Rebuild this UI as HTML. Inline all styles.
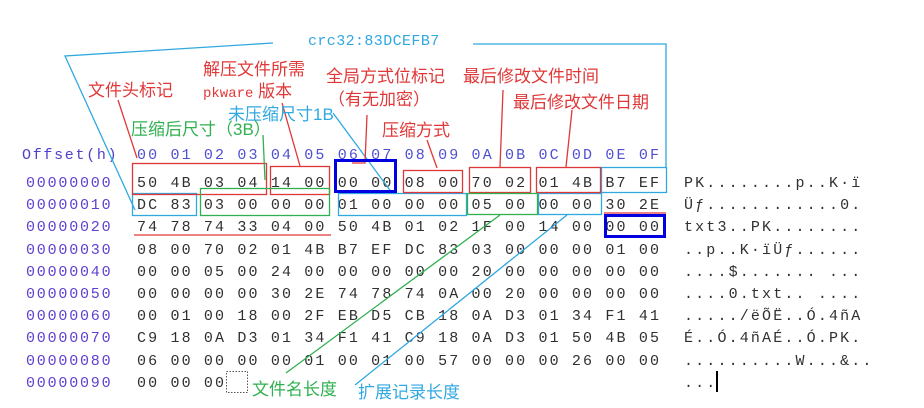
<!DOCTYPE html>
<html><head><meta charset="utf-8"><style>
html,body{margin:0;padding:0;background:#fff;width:924px;height:408px;overflow:hidden}
svg{display:block}
.m{font-family:"Liberation Mono",monospace;font-size:15px;letter-spacing:2.15px}
.c{font-family:"Liberation Sans","Noto Sans CJK SC",sans-serif;font-size:17px}
</style></head><body>
<svg width="924" height="408" xmlns="http://www.w3.org/2000/svg">
<g class="m" xml:space="preserve">
<text x="22" y="159" fill="#5040c8" style="letter-spacing:1.7px">Offset(h)</text>
<text x="137" y="159" fill="#5050d0">00 01 02 03 04 05 06 07 08 09 0A 0B 0C 0D 0E 0F</text>
<g fill="#6040d0" style="letter-spacing:1.8px">
<text x="26" y="187">00000000</text><text x="26" y="209">00000010</text><text x="26" y="231">00000020</text><text x="26" y="254">00000030</text><text x="26" y="276">00000040</text><text x="26" y="298">00000050</text><text x="26" y="320">00000060</text><text x="26" y="342">00000070</text><text x="26" y="365">00000080</text><text x="26" y="387">00000090</text>
</g>
<g fill="#303030">
<text x="137" y="187">50 4B 03 04 14 00 00 00 08 00 70 02 01 4B B7 EF</text>
<text x="137" y="209">DC 83 03 00 00 00 01 00 00 00 05 00 00 00 30 2E</text>
<text x="137" y="231">74 78 74 33 04 00 50 4B 01 02 1F 00 14 00 00 00</text>
<text x="137" y="254">08 00 70 02 01 4B B7 EF DC 83 03 00 00 00 01 00</text>
<text x="137" y="276">00 00 05 00 24 00 00 00 00 00 20 00 00 00 00 00</text>
<text x="137" y="298">00 00 00 00 30 2E 74 78 74 0A 00 20 00 00 00 00</text>
<text x="137" y="320">00 01 00 18 00 2F EB D5 CB 18 0A D3 01 34 F1 41</text>
<text x="137" y="342">C9 18 0A D3 01 34 F1 41 C9 18 0A D3 01 50 4B 05</text>
<text x="137" y="365">06 00 00 00 00 01 00 01 00 57 00 00 00 26 00 00</text>
<text x="137" y="387">00 00 00</text>
<text x="684" y="187">PK........p..K·ï</text>
<text x="684" y="209">Üƒ............0.</text>
<text x="684" y="231">txt3..PK........</text>
<text x="684" y="254">..p..K·ïÜƒ......</text>
<text x="684" y="276">....$....... ...</text>
<text x="684" y="298">....0.txt.. ....</text>
<text x="684" y="320">...../ëÕË..Ó.4ñA</text>
<text x="684" y="342">É..Ó.4ñAÉ..Ó.PK.</text>
<text x="684" y="365">..........W...&amp;..</text>
<text x="684" y="387">...</text>
</g>
</g>
<rect x="716" y="371" width="2" height="21" fill="#000"/>
<rect x="226.5" y="371.5" width="21" height="21" fill="none" stroke="#555" stroke-dasharray="1.5,1.5"/>
<g fill="none" stroke-width="1.3">
<g stroke="#30a8e0">
<polyline points="273,43 65,56 135,210"/>
<polyline points="473,44 666,44 666,168"/>
<rect x="132.5" y="193.5" width="64" height="22"/>
<rect x="338.5" y="193.5" width="128" height="22"/>
<rect x="538.5" y="193.5" width="63" height="21"/>
<rect x="601.5" y="167.5" width="65" height="25"/>
<line x1="333" y1="113" x2="392" y2="193"/>
<line x1="355" y1="385" x2="567" y2="215"/>
</g>
<g stroke="#e03838">
<rect x="132.5" y="163.5" width="134" height="31"/>
<rect x="270.5" y="166.5" width="59" height="28"/>
<rect x="403.5" y="170.5" width="59" height="22"/>
<rect x="469.5" y="167.5" width="61" height="25"/>
<rect x="536.5" y="167.5" width="64" height="25"/>
<line x1="134" y1="235" x2="331" y2="235"/>
<line x1="604" y1="213" x2="666" y2="213"/>
<line x1="118" y1="100" x2="137" y2="158"/>
<line x1="282" y1="103" x2="300" y2="166"/>
<polyline points="367,115 365,163 352,163"/>
<line x1="427" y1="140" x2="437" y2="168"/>
<line x1="503" y1="90" x2="500" y2="167"/>
<line x1="572" y1="110" x2="566" y2="167"/>
</g>
<g stroke="#30b050">
<rect x="200.5" y="188.5" width="129" height="27"/>
<rect x="467.5" y="193.5" width="70" height="21"/>
<line x1="263" y1="135" x2="265" y2="180"/>
<line x1="286" y1="373" x2="500" y2="215"/>
</g>
<g stroke="#0000e0" stroke-width="3">
<rect x="335.5" y="160.5" width="60" height="31"/>
<rect x="605.5" y="215.5" width="59" height="21"/>
</g>
</g>
<text x="308" y="45" class="m" fill="#30a8e0" style="letter-spacing:0.4px">crc32:83DCEFB7</text>
<g class="c" fill="#e03838">
<text x="88" y="96">文件头标记</text>
<text x="203" y="75">解压文件所需</text>
<text x="203" y="97"><tspan class="m" style="letter-spacing:0;font-size:14px">pkware</tspan> 版本</text>
<text x="326" y="82">全局方式位标记</text>
<text x="328" y="105">（有无加密）</text>
<text x="382" y="136">压缩方式</text>
<text x="463" y="82">最后修改文件时间</text>
<text x="513" y="108">最后修改文件日期</text>
</g>
<text x="228" y="120" class="c" fill="#30a8e0">未压缩尺寸1B</text>
<text x="131" y="135" class="c" fill="#30b050">压缩后尺寸（3B）</text>
<text x="252" y="395" class="c" fill="#30b050">文件名长度</text>
<text x="358" y="398" class="c" fill="#30a8e0">扩展记录长度</text>
</svg>
</body></html>
